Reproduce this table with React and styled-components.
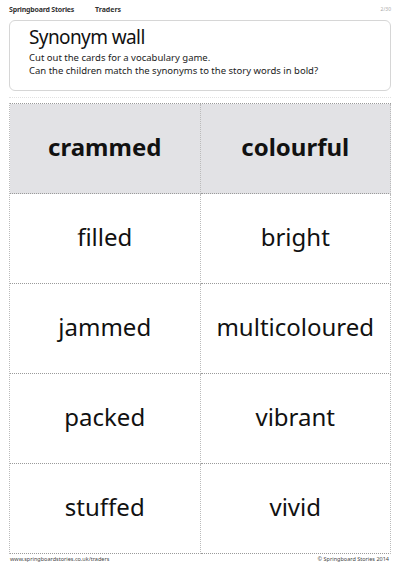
import React from "react";
import styled, { createGlobalStyle } from "styled-components";

const Global = createGlobalStyle`
  html, body { margin: 0; padding: 0; background: #fff; }
  body { font-family: "Noto Sans", "Open Sans", sans-serif; color: #1a1a1a; }
`;

const Page = styled.div`
  width: 400px;
  height: 566px;
  box-sizing: border-box;
  padding: 3px 9px 0 9px;
  display: flex;
  flex-direction: column;
`;

const TopBar = styled.div`
  display: flex;
  align-items: center;
  height: 12px;
  font-size: 7px;
  font-weight: 700;
  color: #333;
`;

const Brand = styled.span`
  width: 86px;
  letter-spacing: -0.2px;
`;

const Section = styled.span`
  flex: 1;
`;

const PageNum = styled.span`
  font-weight: 400;
  color: #aaa;
  font-size: 5px;
`;

const Intro = styled.div`
  margin-top: 5px;
  height: 71px;
  box-sizing: border-box;
  border: 1px solid #d6d6d6;
  border-radius: 6px;
  padding: 3px 19px;
`;

const Title = styled.h1`
  margin: 0;
  font-size: 19px;
  letter-spacing: -0.6px;
  font-weight: 400;
  line-height: 26px;
  color: #111;
`;

const Instr = styled.p`
  margin: 1px 0 0 0;
  font-size: 9.5px;
  line-height: 13px;
  color: #222;
`;

const Separator = styled.div`
  margin-top: 6px;
  border-top: 1px dotted #e2e2e2;
`;

const Grid = styled.div`
  margin-top: 5px;
  display: grid;
  grid-template-columns: 1fr 1fr;
  grid-auto-rows: 90px;
  border-top: 1px dotted #9a9a9a;
  border-left: 1px dotted #bbb;
`;

const Card = styled.div`
  display: flex;
  align-items: center;
  justify-content: center;
  padding-bottom: 4px;
  box-sizing: border-box;
  background: ${(p) => (p.$head ? "#e2e2e5" : "#fff")};
  border-right: 1px dotted #bbb;
  border-bottom: 1px dotted #9a9a9a;
  font-size: 24px;
  font-weight: ${(p) => (p.$head ? 700 : 400)};
  color: #111;
`;

const Footer = styled.div`
  margin-top: 1px;
  display: flex;
  justify-content: space-between;
  font-size: 5.5px;
  color: #444;
  padding: 0 2px 0 1px;
`;

const words = [
  ["crammed", "colourful"],
  ["filled", "bright"],
  ["jammed", "multicoloured"],
  ["packed", "vibrant"],
  ["stuffed", "vivid"],
];

export default function App() {
  return (
    <>
      <Global />
      <Page>
        <TopBar>
          <Brand>Springboard Stories</Brand>
          <Section>Traders</Section>
          <PageNum>2/30</PageNum>
        </TopBar>
        <Intro>
          <Title>Synonym wall</Title>
          <Instr>
            Cut out the cards for a vocabulary game.
            <br />
            Can the children match the synonyms to the story words in bold?
          </Instr>
        </Intro>
        <Separator />
        <Grid>
          {words.map((row, i) =>
            row.map((w) => (
              <Card key={w} $head={i === 0}>
                {w}
              </Card>
            ))
          )}
        </Grid>
        <Footer>
          <span>www.springboardstories.co.uk/traders</span>
          <span>© Springboard Stories 2014</span>
        </Footer>
      </Page>
    </>
  );
}
